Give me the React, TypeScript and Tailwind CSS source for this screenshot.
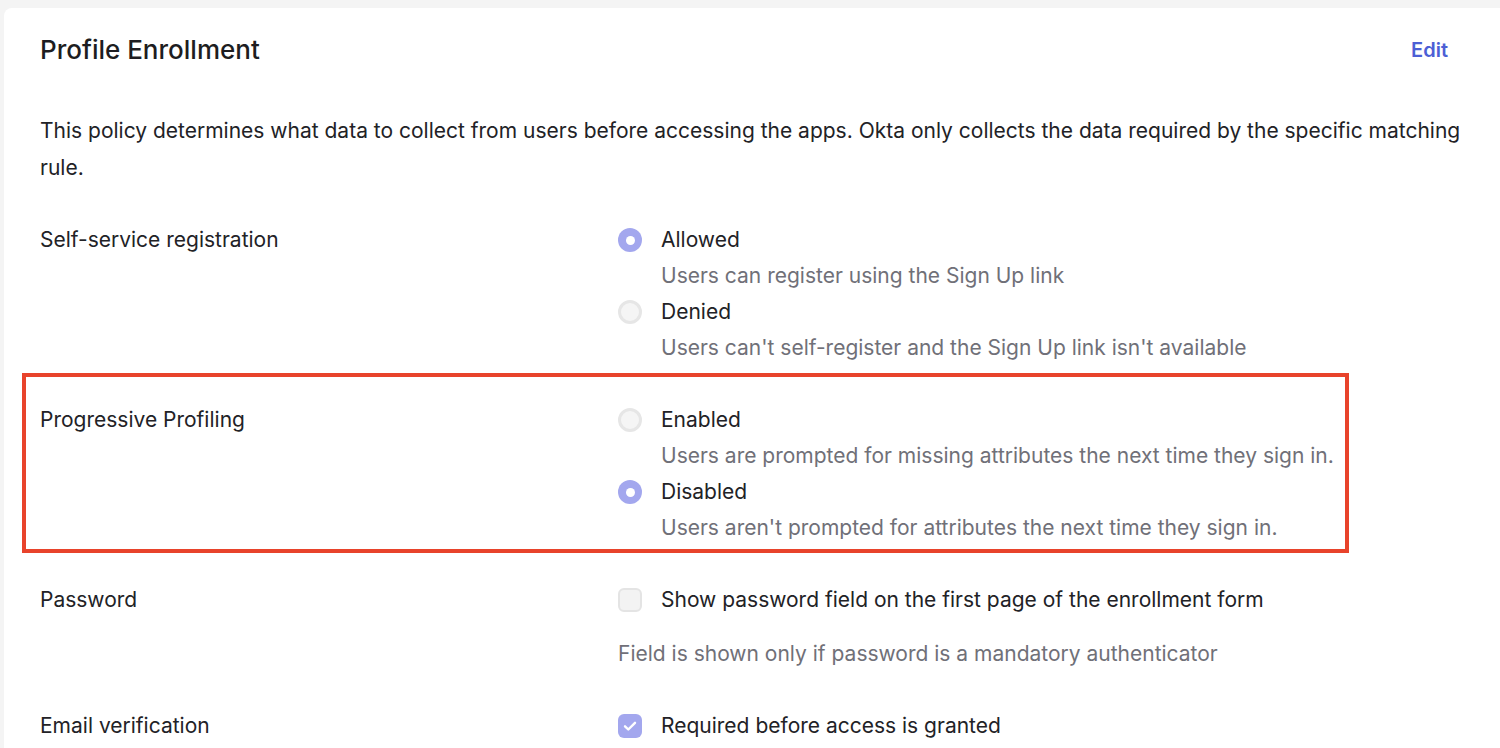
import React from "react";

type Choice = { label: string; hint: string; selected: boolean };

const Radio = ({ selected }: { selected: boolean }) =>
  selected ? (
    <span className="flex h-6 w-6 shrink-0 items-center justify-center rounded-full bg-[#a3a7ee]">
      <span className="h-[9px] w-[9px] rounded-full bg-white" />
    </span>
  ) : (
    <span className="flex h-6 w-6 shrink-0 items-center justify-center rounded-full border-[3px] border-[#e6e6e6] bg-[#f5f5f5]" />
  );

const Checkbox = ({ checked }: { checked: boolean }) =>
  checked ? (
    <span className="flex h-6 w-6 shrink-0 items-center justify-center rounded-md bg-[#a3a7ee]">
      <svg width="16" height="16" viewBox="0 0 16 16" fill="none">
        <path d="M3 8.3l3.3 3.2L13 4.8" stroke="white" strokeWidth="2.4" strokeLinecap="round" strokeLinejoin="round" />
      </svg>
    </span>
  ) : (
    <span className="h-6 w-6 shrink-0 rounded-md border-2 border-[#e4e4e4] bg-[#f3f3f3]" />
  );

const RadioGroup = ({ choices }: { choices: Choice[] }) => (
  <div className="flex flex-col">
    {choices.map((c) => (
      <div key={c.label}>
        <div className="flex items-center gap-[19px]">
          <Radio selected={c.selected} />
          <span className="text-[#222226]">{c.label}</span>
        </div>
        <div className="pl-[43px] text-[#707078]">{c.hint}</div>
      </div>
    ))}
  </div>
);

const Row = ({ label, children }: { label: string; children: React.ReactNode }) => (
  <div className="grid grid-cols-[578px_1fr]">
    <div className="text-[#222226]">{label}</div>
    {children}
  </div>
);

export default function App() {
  return (
    <div
      className="min-h-screen bg-[#f4f4f4] pl-1 pt-2"
      style={{ fontFamily: "Inter, 'Noto Sans', sans-serif" }}
    >
      <div className="min-h-[740px] rounded-tl-lg bg-white pb-10 pl-9 pr-[52px] pt-6 text-[21px] leading-9">
        <div className="flex items-center justify-between">
          <h1 className="text-[26px] font-medium text-[#1d1d21]">Profile Enrollment</h1>
          <a className="text-[20px] font-semibold text-[#4c5fd5]">Edit</a>
        </div>

        {/* description runs a little past the Edit link's right edge */}
        <p className="-mr-7 mb-9 mt-[44px] leading-[37px] text-[#222226]">
          This policy determines what data to collect from users before accessing the apps. Okta only collects the data
          required by the specific matching rule.
        </p>

        <div className="flex flex-col gap-9">
          <Row label="Self-service registration">
            <RadioGroup
              choices={[
                { label: "Allowed", hint: "Users can register using the Sign Up link", selected: true },
                { label: "Denied", hint: "Users can't self-register and the Sign Up link isn't available", selected: false },
              ]}
            />
          </Row>

          <div className="relative">
            <span className="pointer-events-none absolute left-[-18px] top-[-29px] h-[180px] w-[1327px] border-4 border-[#e8432b]" />
            <Row label="Progressive Profiling">
              <RadioGroup
                choices={[
                  {
                    label: "Enabled",
                    hint: "Users are prompted for missing attributes the next time they sign in.",
                    selected: false,
                  },
                  {
                    label: "Disabled",
                    hint: "Users aren't prompted for attributes the next time they sign in.",
                    selected: true,
                  },
                ]}
              />
            </Row>
          </div>

          <Row label="Password">
            <div className="flex flex-col gap-[18px]">
              <div className="flex items-center gap-[19px]">
                <Checkbox checked={false} />
                <span className="text-[#222226]">Show password field on the first page of the enrollment form</span>
              </div>
              <div className="text-[#707078]">Field is shown only if password is a mandatory authenticator</div>
            </div>
          </Row>

          <Row label="Email verification">
            <div className="flex items-center gap-[19px]">
              <Checkbox checked={true} />
              <span className="text-[#222226]">Required before access is granted</span>
            </div>
          </Row>
        </div>
      </div>
    </div>
  );
}
